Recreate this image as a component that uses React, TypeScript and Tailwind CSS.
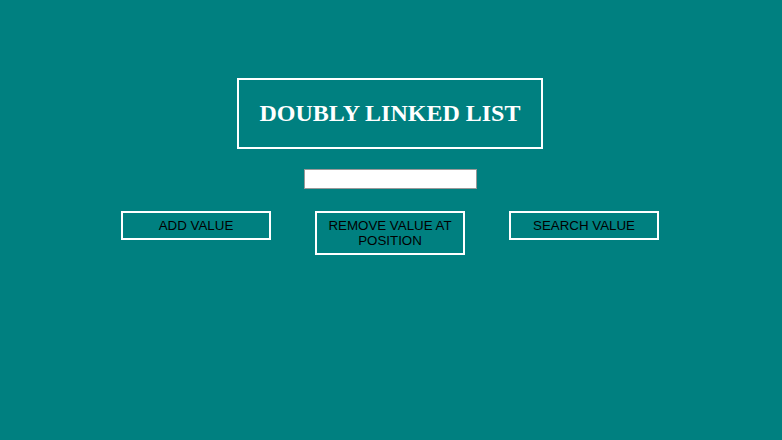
export default function App() {
  return (
    <div className="flex min-h-[440px] w-full flex-col items-center bg-[#008080] pt-[78px] pr-[2px]">
      {/* Title */}
      <h1 className="border-2 border-white px-[21px] py-[20px] font-['Liberation_Serif',serif] text-[24px] leading-[27px] font-bold text-white">
        DOUBLY LINKED LIST
      </h1>

      <input
        type="text"
        className="mt-[20px] h-[20px] w-[173px] border border-[#999] bg-white px-1 text-[13px] outline-none"
      />

      {/* Actions */}
      <div className="mt-[22px] flex items-start gap-[44px] font-['Liberation_Sans',Arial,sans-serif] text-[13.33px] leading-[15px] text-black">
        <button className="w-[150px] border-2 border-white px-2 py-[5px] text-center">ADD VALUE</button>
        <button className="w-[150px] border-2 border-white px-2 py-[5px] text-center">
          REMOVE VALUE AT POSITION
        </button>
        <button className="w-[150px] border-2 border-white px-2 py-[5px] text-center">SEARCH VALUE</button>
      </div>
    </div>
  );
}
